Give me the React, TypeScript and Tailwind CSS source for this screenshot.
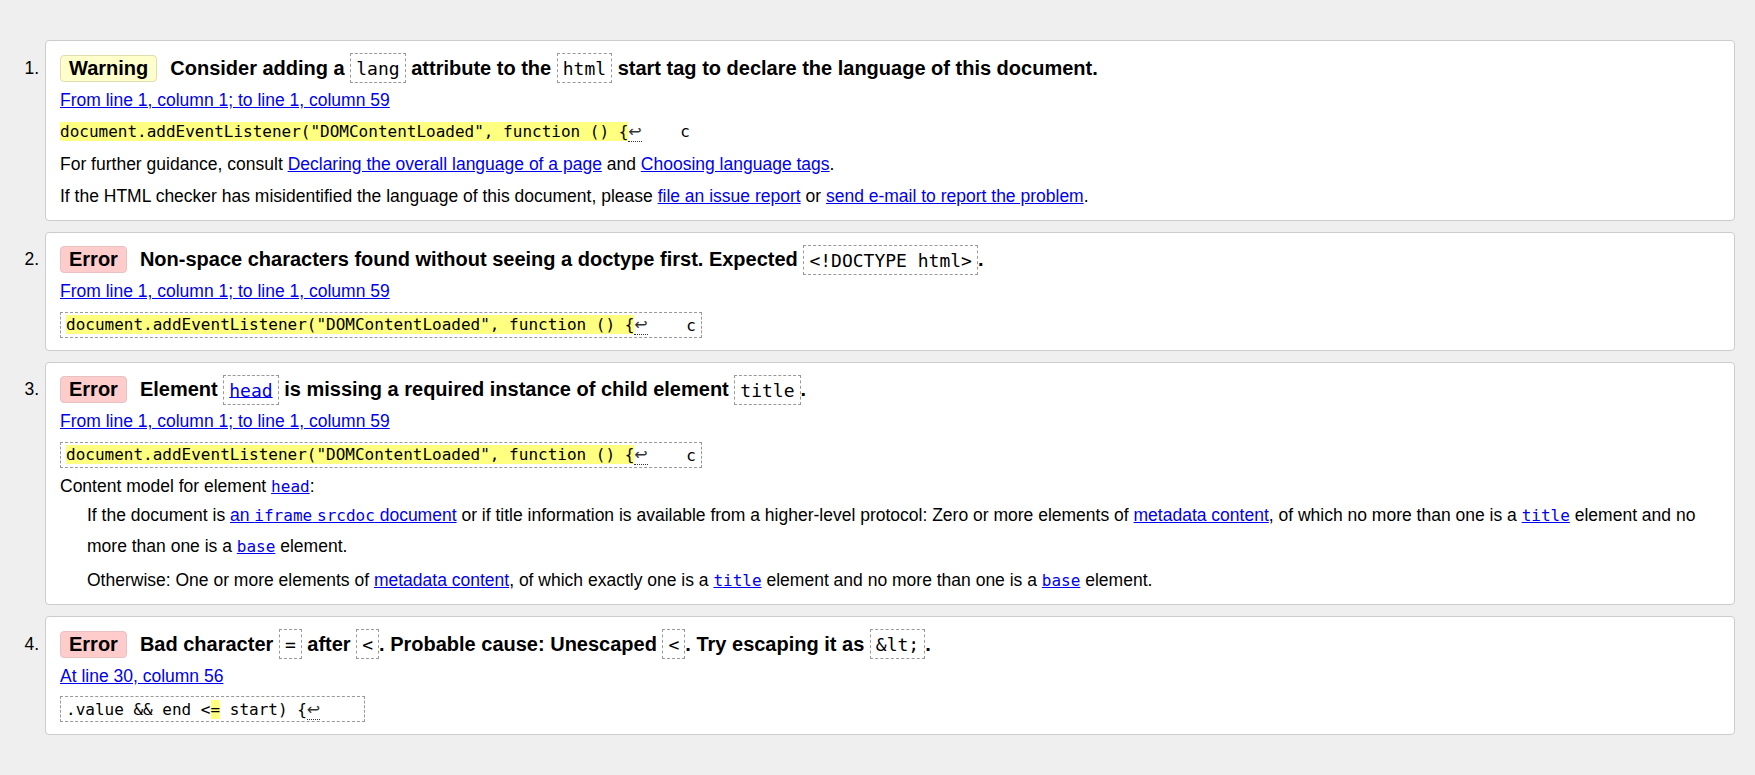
import type { ReactNode } from "react";

const MONO = "font-['DejaVu_Sans_Mono',monospace]";

function Badge({ kind }: { kind: "Warning" | "Error" }) {
  const tone =
    kind === "Warning"
      ? "bg-[#ffffcc] border-[#e0ddb0]"
      : "bg-[#ffcccc] border-[#e6c2c2]";
  return (
    <span className={`mr-[13px] inline-block rounded-[4px] border px-2 leading-[25px] ${tone}`}>
      {kind}
    </span>
  );
}

function HCode({ children }: { children: ReactNode }) {
  return (
    <code className={`${MONO} border border-dashed border-[#999] px-[5px] py-[3.5px] text-[18px] font-normal leading-none`}>
      {children}
    </code>
  );
}

function A({ children }: { children: ReactNode }) {
  return <a className="cursor-pointer text-[#0000ee] underline">{children}</a>;
}

function C({ children }: { children: ReactNode }) {
  return <code className={`${MONO} text-[16px] leading-none`}>{children}</code>;
}

function Mark({ children }: { children: ReactNode }) {
  return <span className="bg-[#ffff80]">{children}</span>;
}

function Lf() {
  return (
    <span className="border-b border-dotted border-[#333] font-['DejaVu_Sans',sans-serif] text-[#333]">
      ↩
    </span>
  );
}

function CodeBox({ children }: { children: ReactNode }) {
  return (
    <p className="leading-[34.5px]">
      <span className={`${MONO} whitespace-pre border border-dashed border-[#999] px-[5px] py-[2.5px] text-[16px] leading-none`}>
        {children}
      </span>
    </p>
  );
}

function Item({ n, children }: { n: number; children: ReactNode }) {
  return (
    <li className="flex">
      <div className="w-[45px] shrink-0 pr-[6px] pt-[11.5px] text-right leading-[32px]">{n}.</div>
      <div className="min-w-0 flex-1 rounded-[4px] border border-[#cccccc] bg-white pt-[10.5px] pr-[14px] pb-[8px] pl-[14px]">
        {children}
      </div>
    </li>
  );
}

const LISTENER = 'document.addEventListener("DOMContentLoaded", function () {';

export default function App() {
  return (
    <div className="min-h-screen bg-[#efefef] pt-[40px] pr-[20px] pb-[40px] font-['Liberation_Sans',Arial,sans-serif] text-[17.5px] text-black">
      <ol className="flex flex-col gap-[11px]">
        <Item n={1}>
          <p className="whitespace-nowrap text-[20px] font-bold leading-[32px]">
            <Badge kind="Warning" />
            {"Consider adding a "}
            <HCode>lang</HCode>
            {" attribute to the "}
            <HCode>html</HCode>
            {" start tag to declare the language of this document."}
          </p>
          <p className="leading-[32px]">
            <A>From line 1, column 1; to line 1, column 59</A>
          </p>
          <p className={`${MONO} whitespace-pre text-[16px] leading-[32px]`}>
            <Mark>{LISTENER}</Mark>
            <Lf />
            {"    c"}
          </p>
          <p className="leading-[32px]">
            For further guidance, consult <A>Declaring the overall language of a page</A> and{" "}
            <A>Choosing language tags</A>.
          </p>
          <p className="leading-[32px]">
            If the HTML checker has misidentified the language of this document, please{" "}
            <A>file an issue report</A> or <A>send e-mail to report the problem</A>.
          </p>
        </Item>

        <Item n={2}>
          <p className="whitespace-nowrap text-[20px] font-bold leading-[32px]">
            <Badge kind="Error" />
            {"Non-space characters found without seeing a doctype first. Expected "}
            <HCode>{"<!DOCTYPE html>"}</HCode>.
          </p>
          <p className="leading-[32px]">
            <A>From line 1, column 1; to line 1, column 59</A>
          </p>
          <CodeBox>
            <Mark>{LISTENER}</Mark>
            <Lf />
            {"    c"}
          </CodeBox>
        </Item>

        <Item n={3}>
          <p className="whitespace-nowrap text-[20px] font-bold leading-[32px]">
            <Badge kind="Error" />
            {"Element "}
            <HCode>
              <A>head</A>
            </HCode>
            {" is missing a required instance of child element "}
            <HCode>title</HCode>.
          </p>
          <p className="leading-[32px]">
            <A>From line 1, column 1; to line 1, column 59</A>
          </p>
          <CodeBox>
            <Mark>{LISTENER}</Mark>
            <Lf />
            {"    c"}
          </CodeBox>
          <p className="leading-[28.5px]">
            Content model for element{" "}
            <A>
              <C>head</C>
            </A>
            :
          </p>
          <div className="pl-[27px]">
            <p className="leading-[31px]">
              If the document is{" "}
              <A>
                an <C>iframe</C> <C>srcdoc</C> document
              </A>{" "}
              or if title information is available from a higher-level protocol: Zero or more elements of{" "}
              <A>metadata content</A>, of which no more than one is a{" "}
              <A>
                <C>title</C>
              </A>{" "}
              element and no more than one is a{" "}
              <A>
                <C>base</C>
              </A>{" "}
              element.
            </p>
            <p className="mt-[3px] leading-[31px]">
              Otherwise: One or more elements of <A>metadata content</A>, of which exactly one is a{" "}
              <A>
                <C>title</C>
              </A>{" "}
              element and no more than one is a{" "}
              <A>
                <C>base</C>
              </A>{" "}
              element.
            </p>
          </div>
        </Item>

        <Item n={4}>
          <p className="whitespace-nowrap text-[20px] font-bold leading-[32px]">
            <Badge kind="Error" />
            {"Bad character "}
            <HCode>=</HCode>
            {" after "}
            <HCode>{"<"}</HCode>
            {". Probable cause: Unescaped "}
            <HCode>{"<"}</HCode>
            {". Try escaping it as "}
            <HCode>{"&lt;"}</HCode>.
          </p>
          <p className="leading-[32px]">
            <A>At line 30, column 56</A>
          </p>
          <CodeBox>
            {".value && end <"}
            <Mark>=</Mark>
            {" start) {"}
            <Lf />
            {"    "}
          </CodeBox>
        </Item>
      </ol>
    </div>
  );
}
